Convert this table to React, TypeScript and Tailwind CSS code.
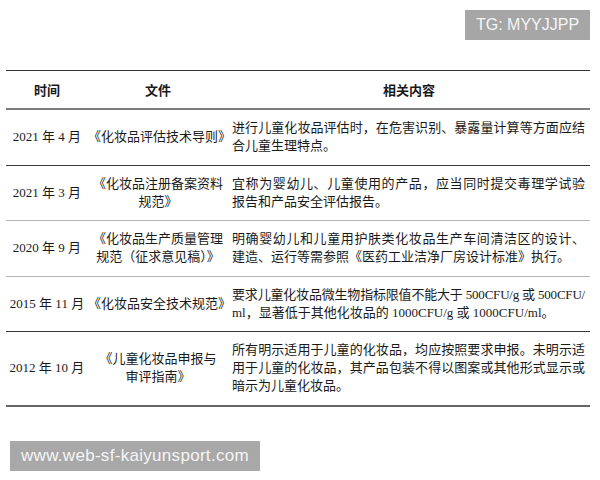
import React from 'react';

type Row = {
  date: string;
  doc: string[];
  lines: string[];
  border: string;
  tight?: boolean;
};

const rows: Row[] = [
  {
    date: '2021 年 4 月',
    doc: ['《化妆品评估技术导则》'],
    lines: ['进行儿童化妆品评估时，在危害识别、暴露量计算等方面应结', '合儿童生理特点。'],
    border: 'border-[#3a3a3a]',
  },
  {
    date: '2021 年 3 月',
    doc: ['《化妆品注册备案资料', '规范》'],
    lines: ['宜称为婴幼儿、儿童使用的产品，应当同时提交毒理学试验', '报告和产品安全评估报告。'],
    border: 'border-[#b4b4b4]',
  },
  {
    date: '2020 年 9 月',
    doc: ['《化妆品生产质量管理', '规范（征求意见稿）》'],
    lines: ['明确婴幼儿和儿童用护肤类化妆品生产车间清洁区的设计、', '建造、运行等需参照《医药工业洁净厂房设计标准》执行。'],
    border: 'border-[#b4b4b4]',
  },
  {
    date: '2015 年 11 月',
    doc: ['《化妆品安全技术规范》'],
    lines: ['要求儿童化妆品微生物指标限值不能大于 500CFU/g 或 500CFU/', 'ml，显著低于其他化妆品的 1000CFU/g 或 1000CFU/ml。'],
    border: 'border-[#3a3a3a]',
    tight: true,
  },
  {
    date: '2012 年 10 月',
    doc: ['《儿童化妆品申报与', '审评指南》'],
    lines: [
      '所有明示适用于儿童的化妆品，均应按照要求申报。未明示适',
      '用于儿童的化妆品，其产品包装不得以图案或其他形式显示或',
      '暗示为儿童化妆品。',
    ],
    border: 'border-[#666666]',
  },
];

export default function App() {
  return (
    <div className="w-[600px] h-[480px] bg-white overflow-hidden font-['Liberation_Serif','Noto_Sans_CJK_SC',serif] text-[#1a1a1a]">
      {/* watermark top */}
      <div className="flex justify-end pt-[10px] pr-[10px]">
        <div className="w-[125px] h-[30px] bg-[#a6a6a6] text-[#f5f5f5] text-[16px] leading-[30px] text-center font-['Liberation_Sans',sans-serif]">
          TG: MYYJJPP
        </div>
      </div>

      {/* table */}
      <div className="mt-[30px] ml-[6px] mr-[10px]">
        <div className="grid grid-cols-[82px_140px_1fr] h-[40px] border-t border-b-2 border-t-[#333333] border-b-[#7c7c7c] items-center text-[13px] font-bold font-['Noto_Sans_CJK_SC',sans-serif]">
          <div className="text-center">时间</div>
          <div className="text-center">文件</div>
          <div className="text-center">相关内容</div>
        </div>

        {rows.map((r, i) => (
          <div
            key={i}
            className={`grid grid-cols-[82px_140px_1fr] items-center text-[13px] leading-[18px] ${
              i === rows.length - 1 ? 'border-b-2' : 'border-b'
            } ${r.border}`}
          >
            <div className="text-center whitespace-nowrap">{r.date}</div>
            <div className="text-center whitespace-nowrap">
              {r.doc.map((d, j) => (
                <div key={j}>{d}</div>
              ))}
            </div>
            <div className="pl-[4px] pr-[5px] py-[9.25px]">
              {r.lines.map((l, j) =>
                j < r.lines.length - 1 ? (
                  <div
                    key={j}
                    className={`text-justify [text-align-last:justify] whitespace-nowrap ${
                      r.tight ? 'tracking-[-0.2px]' : ''
                    }`}
                  >
                    {l}
                  </div>
                ) : (
                  <div key={j} className="whitespace-nowrap">
                    {l}
                  </div>
                )
              )}
            </div>
          </div>
        ))}
      </div>

      {/* watermark bottom */}
      <div className="mt-[34px] pl-[10px]">
        <div className="inline-block h-[30px] px-[11px] bg-[#a8a8a8] text-[#f5f5f5] text-[17px] leading-[30px] tracking-[0.3px] font-['Liberation_Sans',sans-serif]">
          www.web-sf-kaiyunsport.com
        </div>
      </div>
    </div>
  );
}
